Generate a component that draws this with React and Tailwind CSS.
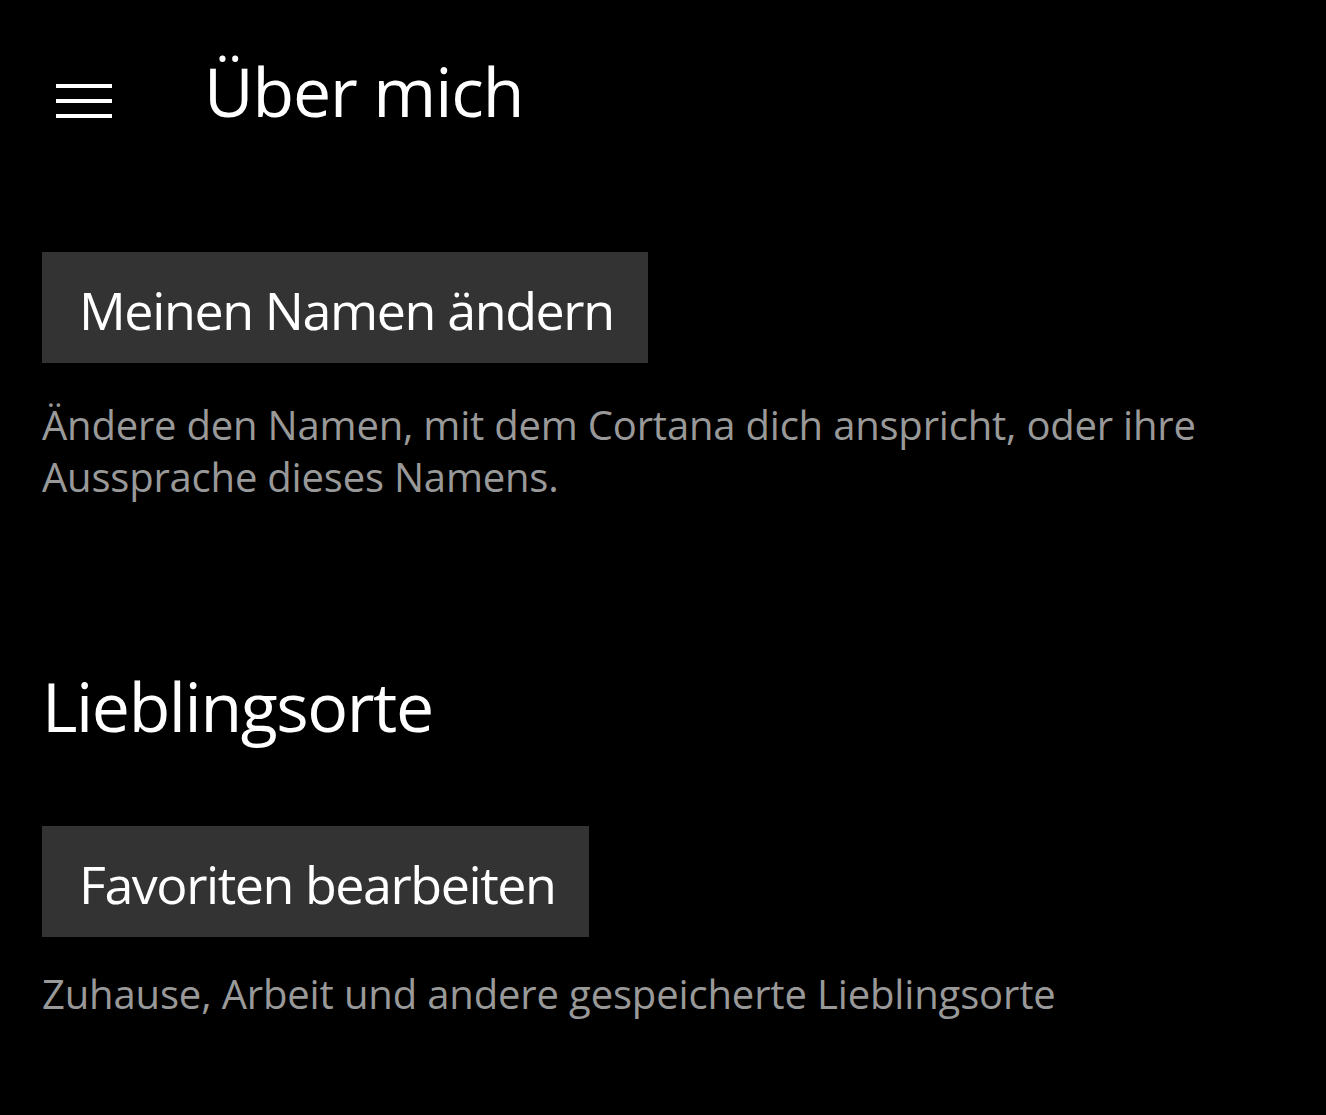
export default function App() {
    return (
        <div className="min-h-screen bg-black text-white" style={{ fontFamily: '"Open Sans", "Noto Sans", sans-serif' }}>
            <header className="flex items-start">
                <button className="ml-[56px] mt-[84px] flex w-[56px] flex-col gap-[11px]" aria-label="Menü">
                    <span className="block h-[4px] w-full bg-white" />
                    <span className="block h-[4px] w-full bg-white" />
                    <span className="block h-[4px] w-full bg-white" />
                </button>
                <h1 className="ml-[92px] mt-[51px] text-[68px] leading-[80px] font-normal tracking-[-1.1px]">Über mich</h1>
            </header>

            <main className="px-[42px]">
                <button className="mt-[121px] block h-[111px] bg-[#333333] pl-[37px] pr-[34px] pt-[28px] pb-[23px] text-left text-[52px] leading-[60px] tracking-[-1.4px]">
                    Meinen Namen ändern
                </button>
                <p className="mt-[36px] text-[40px] leading-[52px] text-[#999999] tracking-[-0.2px]">
                    Ändere den Namen, mit dem Cortana dich anspricht, oder ihre
                    <br />
                    Aussprache dieses Namens.
                </p>

                <h2 className="mt-[163px] text-[68px] leading-[80px] font-normal tracking-[-1.4px]">Lieblingsorte</h2>

                <button className="mt-[80px] block h-[111px] bg-[#333333] pl-[37px] pr-[34px] pt-[28px] pb-[23px] text-left text-[52px] leading-[60px] tracking-[-1.45px]">
                    Favoriten bearbeiten
                </button>
                <p className="mt-[31px] text-[40px] leading-[52px] text-[#999999] tracking-[-0.15px]">
                    Zuhause, Arbeit und andere gespeicherte Lieblingsorte
                </p>
            </main>
        </div>
    );
}
